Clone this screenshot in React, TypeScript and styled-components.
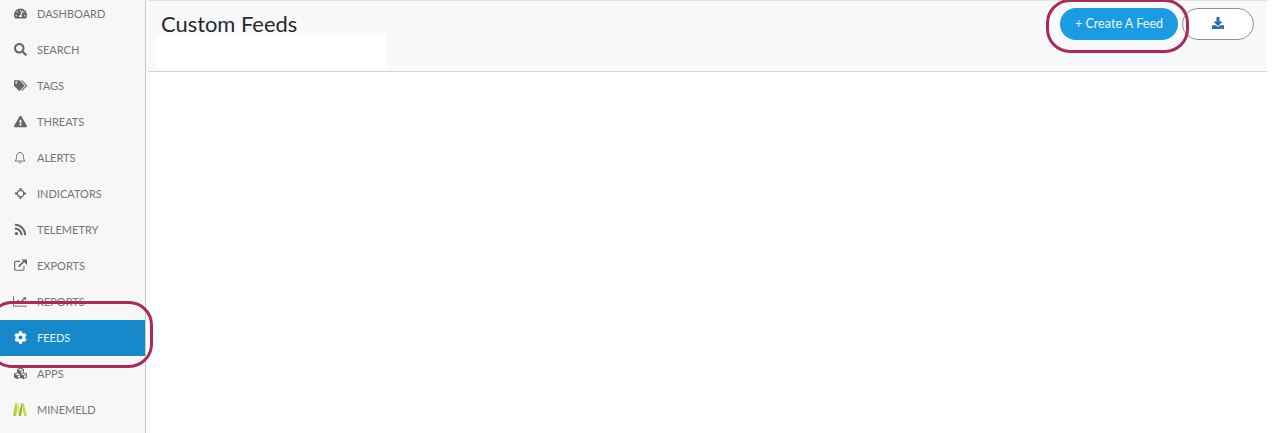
import * as React from 'react';
import styled, { createGlobalStyle } from 'styled-components';
import {
  FaTachometerAlt,
  FaSearch,
  FaTags,
  FaExclamationTriangle,
  FaRss,
  FaCog,
  FaCubes,
  FaDownload,
} from 'react-icons/fa';

const GlobalStyle = createGlobalStyle`
  html, body {
    margin: 0;
    padding: 0;
    background: #ffffff;
    font-family: Lato, "Open Sans", sans-serif;
  }
`;

const Page = styled.div`
  position: relative;
  width: 1274px;
  height: 433px;
  display: flex;
  overflow: hidden;
  background: #ffffff;
`;

const Sidebar = styled.nav`
  width: 145px;
  height: 433px;
  flex-shrink: 0;
  background: #f7f7f7;
  border-right: 1px solid #c8c9cb;
  overflow: hidden;
`;

const NavList = styled.ul`
  list-style: none;
  margin: -4px 0 0;
  padding: 0;
`;

const NavItem = styled.li<{ $active?: boolean }>`
  height: 36px;
  box-sizing: border-box;
  padding: 0 0 2px 13px;
  display: flex;
  align-items: center;
  font-size: 11px;
  color: ${(p) => (p.$active ? '#e4f1f9' : '#737679')};
  background: ${(p) => (p.$active ? '#1689ca' : 'transparent')};
`;

const NavIcon = styled.span<{ $active?: boolean }>`
  width: 14px;
  height: 14px;
  margin-right: 10px;
  display: flex;
  align-items: center;
  justify-content: center;
  font-size: 13px;
  color: ${(p) => (p.$active ? '#ffffff' : '#63676b')};
`;

const Main = styled.main`
  flex: 1;
  display: flex;
  flex-direction: column;
  padding: 0 7px 0 2px;
  min-width: 0;
`;

const Header = styled.header`
  height: 72px;
  box-sizing: border-box;
  display: flex;
  justify-content: space-between;
  background: #f8f9fb;
  border-top: 1px solid #e4e4e6;
  border-bottom: 1px solid #cfd6dc;
`;

const TitleBlock = styled.div`
  display: flex;
  flex-direction: column;
  padding-left: 8px;
`;

const Title = styled.h1`
  margin: 0;
  padding: 9px 0 0 5px;
  height: 25px;
  font-size: 21.9px;
  line-height: 28px;
  font-weight: 400;
  color: #26292c;
`;

const WhiteStrip = styled.div`
  width: 230px;
  height: 33px;
  background: #ffffff;
`;

const Actions = styled.div`
  display: flex;
  align-items: flex-start;
  gap: 4px;
  padding: 7px 13px 0 0;
`;

const CreateButton = styled.button`
  width: 118px;
  height: 32px;
  border: none;
  border-radius: 16px;
  background: #1b9ce2;
  color: #eaf6fd;
  font: 400 12.6px Lato, sans-serif;
  padding: 0 0 2px;
`;

const ExportButton = styled.button`
  width: 72px;
  height: 32px;
  border: 1px solid #8e9296;
  border-radius: 16px;
  background: #ffffff;
  color: #2a6ca8;
  font-size: 12px;
  padding: 0 0 2px;
  display: flex;
  align-items: center;
  justify-content: center;
`;

const Callout = styled.div<{ $x: number; $y: number; $w: number; $h: number; $r: number }>`
  position: absolute;
  left: ${(p) => p.$x}px;
  top: ${(p) => p.$y}px;
  width: ${(p) => p.$w}px;
  height: ${(p) => p.$h}px;
  box-sizing: border-box;
  border: 3px solid #ab2a58;
  border-radius: ${(p) => p.$r}px;
  pointer-events: none;
`;

const BellIcon = () => (
  <svg width="12" height="13" viewBox="0 0 12 13" fill="none" stroke="currentColor" strokeWidth="0.9">
    <path d="M1 10C2.3 8.6 2.6 7.4 2.6 5.2 2.6 3 4 1.5 6 1.5S9.4 3 9.4 5.2C9.4 7.4 9.7 8.6 11 10Z" />
    <path d="M4.8 11.2a1.3 1.3 0 0 0 2.4 0" />
  </svg>
);

const CrosshairIcon = () => (
  <svg width="11" height="11" viewBox="0 0 11 11" fill="none" stroke="currentColor">
    <circle cx="5.5" cy="5.5" r="3.2" strokeWidth="1.2" />
    <path d="M5.5 0v3M5.5 8v3M0 5.5h3M8 5.5h3" strokeWidth="1.9" />
  </svg>
);

const ExportIcon = () => (
  <svg width="13" height="12" viewBox="0 0 13 12" fill="none" stroke="currentColor">
    <path d="M10 7v3a1.2 1.2 0 0 1-1.2 1.2H1.9A1.2 1.2 0 0 1 .7 10V3.6a1.2 1.2 0 0 1 1.2-1.2H6" strokeWidth="1.1" />
    <path d="M4.6 7.6 10.6 1.6" strokeWidth="1.6" />
    <path d="M7.6 0.5H13V5.9Z" fill="currentColor" stroke="none" />
  </svg>
);

const ChartIcon = () => (
  <svg width="15" height="11" viewBox="0 0 15 11" fill="none" stroke="currentColor">
    <path d="M0.5 0V10.5H15" strokeWidth="1" />
    <path d="M2.5 8 5.5 4.5 8 6.5 12.5 2" strokeWidth="1.3" />
    <path d="M10.5 1H14V4.5Z" fill="currentColor" stroke="none" />
  </svg>
);

const MinemeldIcon = () => (
  <svg width="14" height="13" viewBox="0 0 14 13">
    <path d="M0 13 2.2 0.5H5L3.2 13Z" fill="#b5cf3a" />
    <path d="M3 0.5H5.2L7.4 10 6 13Z" fill="#dfe36a" />
    <path d="M5.6 13 8.2 0.5H10L8 13Z" fill="#86ba3c" />
    <path d="M8.6 0.5H10.8L14 13H11Z" fill="#cdd944" />
  </svg>
);

const navItems: { label: string; icon: React.ReactNode; active?: boolean }[] = [
  { label: 'DASHBOARD', icon: <FaTachometerAlt /> },
  { label: 'SEARCH', icon: <FaSearch /> },
  { label: 'TAGS', icon: <FaTags /> },
  { label: 'THREATS', icon: <FaExclamationTriangle /> },
  { label: 'ALERTS', icon: <BellIcon /> },
  { label: 'INDICATORS', icon: <CrosshairIcon /> },
  { label: 'TELEMETRY', icon: <FaRss /> },
  { label: 'EXPORTS', icon: <ExportIcon /> },
  { label: 'REPORTS', icon: <ChartIcon /> },
  { label: 'FEEDS', icon: <FaCog />, active: true },
  { label: 'APPS', icon: <FaCubes /> },
  { label: 'MINEMELD', icon: <MinemeldIcon /> },
];

export default function App() {
  return (
    <Page>
      <GlobalStyle />
      <Sidebar>
        <NavList>
          {navItems.map((item) => (
            <NavItem key={item.label} $active={item.active}>
              <NavIcon $active={item.active}>{item.icon}</NavIcon>
              {item.label}
            </NavItem>
          ))}
        </NavList>
      </Sidebar>
      <Main>
        <Header>
          <TitleBlock>
            <Title>Custom Feeds</Title>
            <WhiteStrip />
          </TitleBlock>
          <Actions>
            <CreateButton>+ Create A Feed</CreateButton>
            <ExportButton>
              <FaDownload />
            </ExportButton>
          </Actions>
        </Header>
      </Main>
      <Callout $x={-12} $y={301} $w={165} $h={67} $r={24} />
      <Callout $x={1046} $y={-1} $w={143} $h={54} $r={24} />
    </Page>
  );
}
